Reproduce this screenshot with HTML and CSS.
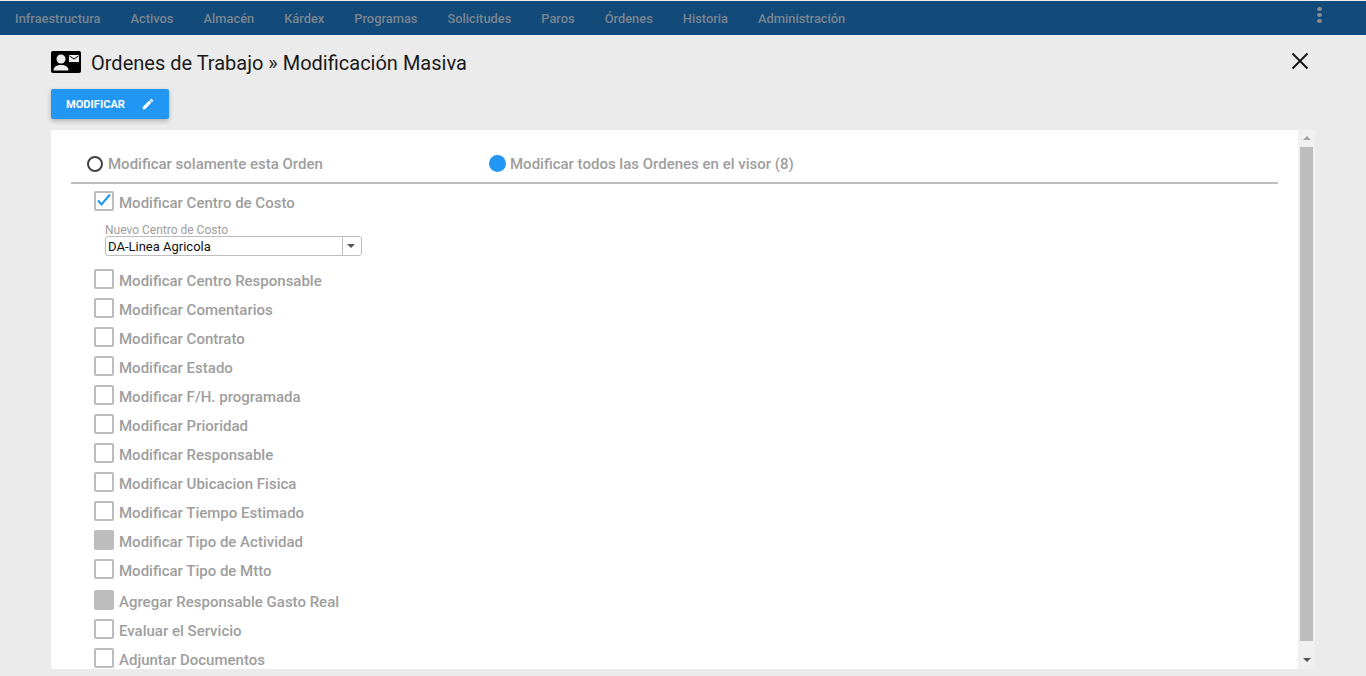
FILE: index.html
```html
<!DOCTYPE html>
<html lang="es">
<head>
<meta charset="utf-8">
<title>Ordenes de Trabajo</title>
<link rel="stylesheet" href="styles.css">
</head>
<body>
<nav class="nav">
  <ul class="menu">
    <li>Infraestructura</li><li>Activos</li><li>Almacén</li><li>Kárdex</li><li>Programas</li><li>Solicitudes</li><li>Paros</li><li>Órdenes</li><li>Historia</li><li>Administración</li>
  </ul>
  <div class="dots"><i></i><i></i><i></i></div>
</nav>
<main class="page">
  <header class="title-row">
    <svg class="title-icon" viewBox="0 0 30 22" aria-hidden="true">
      <rect width="30" height="22" rx="2" fill="#000"/>
      <circle cx="10" cy="8" r="4.500" fill="#eee"/>
      <path d="M2.500 19.500c0-4 3.500-5.500 7.500-5.500s7.500 1.500 7.500 5.500z" fill="#eee"/>
      <rect x="18" y="4" width="10" height="7" fill="#eee"/>
      <path d="M18.500 5l4.500 3 4.500-3" fill="none" stroke="#000" stroke-width="1"/>
    </svg>
    <h1>Ordenes de Trabajo » Modificación Masiva</h1>
    <svg class="close" viewBox="0 0 18 18" aria-hidden="true"><path d="M1.500 1.500l15 15M16.500 1.500l-15 15" stroke="#111" stroke-width="1.800" fill="none"/></svg>
  </header>
  <button class="btn">MODIFICAR
    <svg viewBox="0 0 24 24" aria-hidden="true"><path d="M3 17.250V21h3.750L17.810 9.940l-3.750-3.750zM20.710 7.040a1 1 0 0 0 0-1.410l-2.340-2.340a1 1 0 0 0-1.410 0l-1.830 1.830 3.750 3.750z" fill="#fff"/></svg>
  </button>
  <section class="panel-wrap">
    <div class="panel">
      <div class="radios">
        <label class="radio r1"><span class="dot"></span>Modificar solamente esta Orden</label>
        <label class="radio"><span class="dot on"></span>Modificar todos las Ordenes en el visor (8)</label>
      </div>
      <div class="list">
        <div class="row"><span class="cb"><svg viewBox="0 0 20 20" aria-hidden="true"><path d="M4 9.500l3.500 4L16 3.500" fill="none" stroke="#2196f3" stroke-width="2"/></svg></span>Modificar Centro de Costo</div>
        <div class="field">
          <div class="field-label">Nuevo Centro de Costo</div>
          <div class="select"><span class="value">DA-Linea Agricola</span><span class="arrow"></span></div>
        </div>
        <div class="row"><span class="cb"></span>Modificar Centro Responsable</div>
        <div class="row"><span class="cb"></span>Modificar Comentarios</div>
        <div class="row"><span class="cb"></span>Modificar Contrato</div>
        <div class="row"><span class="cb"></span>Modificar Estado</div>
        <div class="row"><span class="cb"></span>Modificar F/H. programada</div>
        <div class="row"><span class="cb"></span>Modificar Prioridad</div>
        <div class="row"><span class="cb"></span>Modificar Responsable</div>
        <div class="row"><span class="cb"></span>Modificar Ubicacion Fisica</div>
        <div class="row"><span class="cb"></span>Modificar Tiempo Estimado</div>
        <div class="row"><span class="cb off"></span>Modificar Tipo de Actividad</div>
        <div class="row"><span class="cb"></span>Modificar Tipo de Mtto</div>
        <div class="row tall"><span class="cb off"></span>Agregar Responsable Gasto Real</div>
        <div class="row"><span class="cb"></span>Evaluar el Servicio</div>
        <div class="row"><span class="cb"></span>Adjuntar Documentos</div>
      </div>
    </div>
    <div class="scrollbar">
      <span class="sb-up"></span>
      <span class="sb-thumb"></span>
      <span class="sb-down"></span>
    </div>
  </section>
</main>
</body>
</html>
```
FILE: styles.css
```css
* { box-sizing: border-box; }
html, body { height: 100%; }
body {
  margin: 0;
  height: 676px;
  overflow: hidden;
  background: #ebebeb;
  font-family: Roboto, "Liberation Sans", sans-serif;
  color: #9e9e9e;
}
.nav {
  height: 35px;
  border-top: 1px solid #e8eef3;
  background: #124a7a;
  display: flex;
  align-items: center;
  justify-content: space-between;
  padding: 0 44px 0 15px;
}
.menu {
  list-style: none;
  margin: 0;
  padding: 0;
  display: flex;
  gap: 30px;
  font-size: 12.870px;
  font-weight: 500;
  color: #7b8590;
}
.dots { display: flex; flex-direction: column; gap: 2px; margin-top: -6px; }
.dots i { width: 5px; height: 4px; border-radius: 50%; background: #8a8f94; }
.page { padding: 0 51px; }
.title-row { display: flex; align-items: center; height: 54px; }
.title-icon { width: 30px; height: 22px; flex: none; }
h1 {
  margin: 2px 0 0 10px;
  font-size: 20px;
  font-weight: 400;
  color: #1a1a1a;
  flex: 1;
}
.close { width: 18px; height: 18px; margin-right: 6px; margin-top: -2px; flex: none; }
.btn {
  display: flex;
  align-items: center;
  justify-content: space-between;
  width: 118px;
  height: 30px;
  padding: 0 14px 0 15px;
  border: 0;
  border-radius: 2px;
  background: #2196f3;
  color: #fff;
  font: 700 11.100px Roboto, sans-serif;
  box-shadow: 0 2px 5px rgba(0,0,0,.26);
}
.btn svg { width: 14px; height: 14px; }
.panel-wrap {
  display: flex;
  margin-top: 11px;
  height: 539px;
  width: 1264px;
}
.panel {
  width: 1247px;
  height: 539px;
  overflow: hidden;
  background: #fff;
  border-radius: 2px;
  padding: 0 20px;
}
.radios {
  display: flex;
  height: 54px;
  border-bottom: 2px solid #bdbdbd;
  font-size: 15px;
  font-weight: 500;
  align-items: center;
  padding: 15px 0 0 16px;
}
.radio { display: flex; align-items: center; color: #9e9e9e; }
.r1 { width: 402px; }
.dot {
  width: 16px;
  height: 16px;
  border-radius: 50%;
  border: 2px solid #424242;
  margin-right: 5px;
}
.dot.on { border: 0; background: #2196f3; width: 17px; height: 17px; margin-right: 4px; }
.list { padding: 4px 0 0 23px; }
.row {
  display: flex;
  align-items: center;
  height: 29px;
  font-size: 15px;
  font-weight: 500;
  color: #9e9e9e;
}
.row.tall { height: 31px; padding-top: 2px; }
.cb {
  width: 20px;
  height: 20px;
  margin-right: 5px;
  margin-top: -4px;
  border: 2px solid #bdbdbd;
  border-radius: 2px;
  background: #fff;
  flex: none;
  position: relative;
}
.cb svg { position: absolute; left: -2px; top: -2px; width: 20px; height: 20px; }
.cb.off { background: #bdbdbd; }
.field { padding: 7px 0 0 11px; height: 49px; }
.field-label { font-size: 12px; line-height: 13px; color: #9e9e9e; }
.select {
  display: flex;
  width: 257px;
  height: 20px;
  margin-top: -1px;
  border: 1px solid #bdbdbd;
  border-radius: 3px;
  background: #fff;
}
.value { flex: 1; padding-left: 2px; font-size: 13px; line-height: 19px; color: #111; }
.arrow {
  width: 19px;
  border-left: 1px solid #bdbdbd;
  position: relative;
}
.arrow::after {
  content: "";
  position: absolute;
  left: 4px;
  top: 7px;
  border: 4.500px solid transparent;
  border-top: 4.500px solid #555;
  border-bottom: 0;
}
.scrollbar {
  width: 17px;
  height: 539px;
  background: #f0f0f0;
  display: flex;
  flex-direction: column;
  align-items: center;
}
.sb-up { flex: none; width: 0; border: 4px solid transparent; border-top: 0; border-bottom: 4px solid #a3a3a3; height: 0; margin: 6px 0 7px; }
.sb-thumb { width: 13px; height: 494px; background: #bdbdbd; flex: none; }
.sb-down { flex: none; width: 0; border: 4px solid transparent; border-bottom: 0; border-top: 4px solid #505050; height: 0; margin-top: 17px; }
```
